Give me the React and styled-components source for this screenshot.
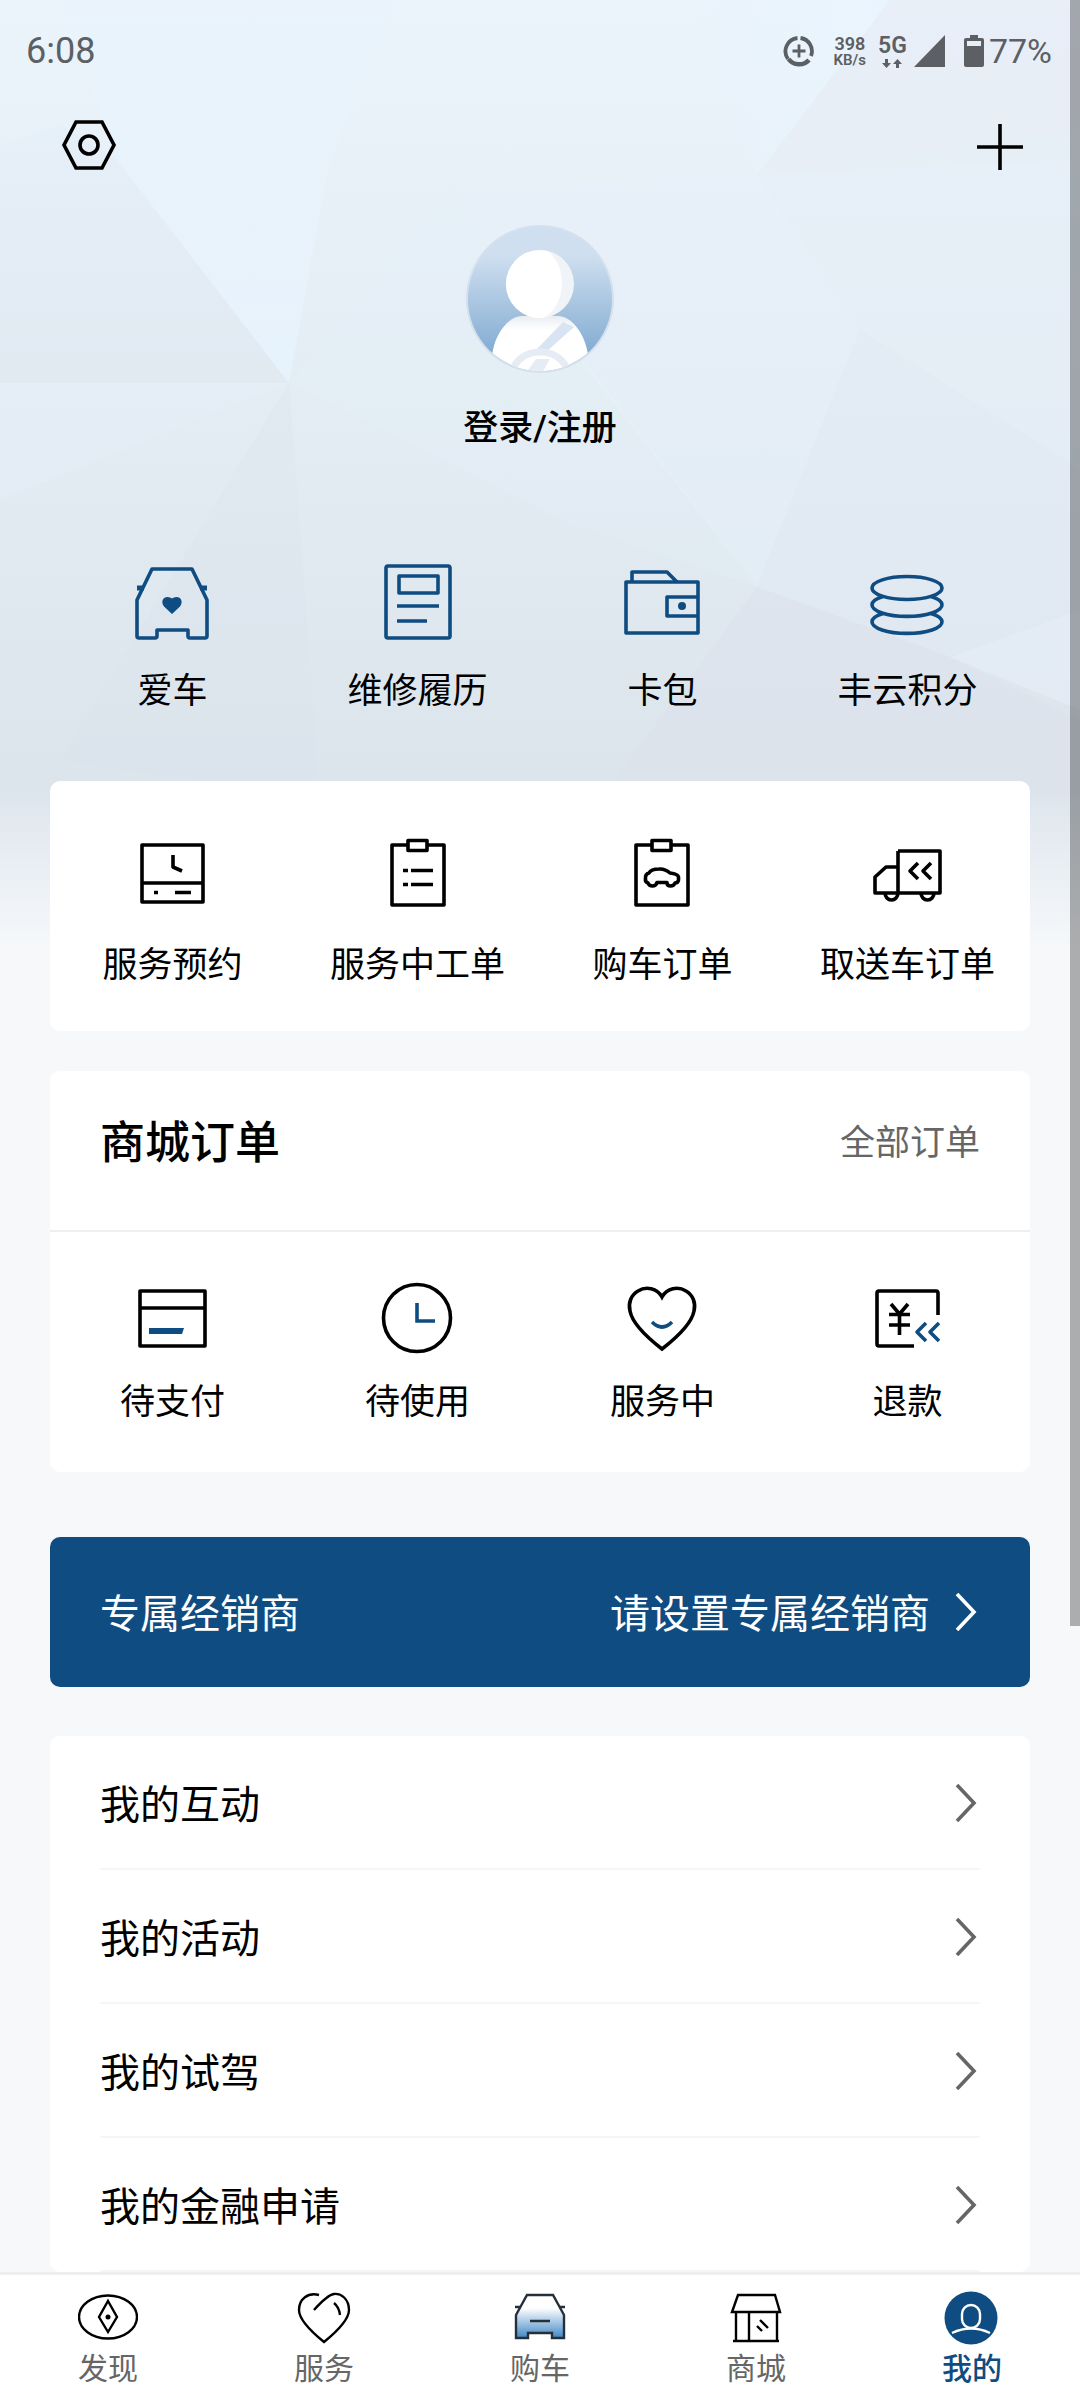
import React from 'react';
import styled, { createGlobalStyle } from 'styled-components';

const blue = '#0f4c81'

const GlobalStyle = createGlobalStyle`
* {
    box-sizing: border-box;
}
body {
    margin: 0;
    background: #f6f8fa;
    color: #000;
    font-family: Roboto, "Noto Sans CJK SC", sans-serif;
}
button {
    border: none;
    background: none;
    padding: 0;
    margin: 0;
    color: inherit;
    font: inherit;
    cursor: pointer;
}
a {
    color: inherit;
    text-decoration: none;
}
svg {
    display: block;
    flex: none;
}
`

const Page = styled.div`
height: 100vh;
display: flex;
flex-direction: column;
position: relative;
overflow: hidden;
`

const Content = styled.main`
flex: 1;
min-height: 0;
overflow-y: auto;
position: relative;
scrollbar-width: none;
`

const Backdrop = styled.svg`
position: absolute;
top: 0;
left: 0;
width: 100%;
height: 960px;
`

const Inner = styled.div`
position: relative;
padding: 0 50px;
`

const ScrollThumb = styled.div`
position: absolute;
top: 0;
right: 0;
width: 10px;
height: calc(68% - 6px);
background: rgba(0, 0, 0, 0.3);
`

const StatusBar = styled.div`
position: relative;
display: flex;
justify-content: space-between;
align-items: center;
height: 102px;
padding: 0 28px 0 26px;
color: #5c5f63;
`

const Time = styled.span`
font-size: 36px;
`

const StatusIcons = styled.div`
display: flex;
align-items: center;
`

const Speed = styled.div`
display: flex;
flex-direction: column;
align-items: center;
margin: 0 12px 0 19px;
font-size: 18px;
line-height: 18px;
font-weight: 600;
small {
    font-size: 15px;
    line-height: 15px;
}
`

const Network = styled.div`
display: flex;
flex-direction: column;
align-items: center;
gap: 2px;
margin-right: 7px;
font-size: 23px;
line-height: 22px;
font-weight: 600;
`

const Battery = styled.span`
display: flex;
align-items: center;
gap: 5px;
margin-left: 19px;
font-size: 34px;
`

const TopBar = styled.header`
display: flex;
justify-content: space-between;
align-items: center;
height: 86px;
margin: 0 2px 0 10px;
`

const Profile = styled.button`
display: block;
margin: 37px auto 106px;
svg {
    margin: 0 auto 31px;
}
span {
    display: block;
    font-size: 35px;
    line-height: 50px;
    font-weight: 500;
}
`

const Grid = styled.div`
display: grid;
grid-template-columns: repeat(4, 1fr);
`

const Tile = styled.button`
display: flex;
flex-direction: column;
align-items: center;
gap: ${props => props.$gap}px;
font-size: 35px;
line-height: 48px;
white-space: nowrap;
`

const Card = styled.section`
background: white;
border-radius: 10px;
`

const ServiceCard = styled(Card)`
margin-top: 65px;
padding: 50px 0 41px;
`

const OrderCard = styled(Card)`
margin-top: 40px;
padding-bottom: 45px;
`

const OrderHead = styled.div`
display: flex;
justify-content: space-between;
align-items: center;
height: 161px;
margin-bottom: 44px;
padding: 0 50px 23px;
border-bottom: 2px solid #eeeff0;
h2 {
    margin: 0;
    font-size: 45px;
    font-weight: 500;
}
a {
    color: #666;
    font-size: 35px;
}
`

const Dealer = styled.button`
display: flex;
justify-content: space-between;
align-items: center;
width: 100%;
height: 150px;
margin: 65px 0 49px;
padding: 0 50px 2px;
border-radius: 10px;
background: ${blue};
color: white;
font-size: 40px;
`

const DealerHint = styled.span`
display: flex;
align-items: center;
gap: 24px;
`

const MenuCard = styled(Card)`
padding: 0 50px;
`

const MenuRow = styled.a`
display: flex;
justify-content: space-between;
align-items: center;
height: 134px;
border-bottom: 2px solid #f5f6f8;
font-size: 40px;
svg {
    color: #666;
}
`

const TabBar = styled.nav`
display: grid;
grid-template-columns: repeat(5, 1fr);
padding: 11px 0 13px;
background: white;
border-top: 3px solid #eeeeee;
`

const Tab = styled.a`
display: flex;
flex-direction: column;
align-items: center;
gap: 5px;
color: ${props => props.$active ? blue : '#666'};
font-size: 30px;
line-height: 36px;
font-weight: ${props => props.$active ? 500 : 400};
`

const Icon = ({ color = '#000', children }) => (
    <svg width='84' height='84' viewBox='1 0 84 84' fill='none' stroke={color} strokeWidth='3.6' strokeLinejoin='round' aria-hidden='true'>
        {children}
    </svg>
)

const TabIcon = ({ children }) => (
    <svg width='60' height='60' viewBox='0 0 60 60' fill='none' stroke='#000' strokeWidth='2.4' aria-hidden='true'>
        {children}
    </svg>
)

const Chevron = () => (
    <svg width='26' height='40' viewBox='0 0 26 40' fill='none' stroke='currentColor' strokeWidth='3.6' aria-hidden='true'>
        <path d='M3 3L20 21L3 39' />
    </svg>
)

const quickLinks = [
    { label: '爱车', icon: <>
        <path d='M22 9H62L77 40V76Q77 78 75 78H60Q58 78 58 76V70H27V76Q27 78 25 78H9Q7 78 7 76V40Z' />
        <path d='M7 28H14M70 28H77' strokeWidth='5' />
        <path d='M42 54L34 46.500C30.500 42 33 37 37.500 37Q40.500 37 42 38.500Q43.500 37 46.500 37C51 37 53.500 42 50 46.500Z' fill={blue} stroke='none' />
    </> },
    { label: '维修履历', icon: <>
        <rect x='11' y='6' width='64' height='72' rx='2' />
        <rect x='24' y='16' width='39' height='17' />
        <path d='M22 46H64M22 61H52' />
    </> },
    { label: '卡包', icon: <>
        <rect x='6' y='22' width='72' height='51' />
        <path d='M12 22V12H47L57 22M78 37H47V56H78' />
        <circle cx='62' cy='46' r='4' fill={blue} stroke='none' />
    </> },
    { label: '丰云积分', icon: <>
        <ellipse cx='42' cy='28' rx='35' ry='11.500' />
        <path d='M18 36.500A35 11.500 0 1 0 66 36.500M18 53.500A35 11.500 0 1 0 66 53.500' />
    </> },
]

const services = [
    { label: '服务预约', icon: <>
        <rect x='12' y='14' width='61' height='57' />
        <path d='M12 52H73M43 24V36L52 40M24 61.500H28M45 61.500H61' />
    </> },
    { label: '服务中工单', icon: <>
        <path d='M33 14H17V74H69V14H52' />
        <rect x='33' y='9.500' width='19' height='10' />
        <path d='M28 39.500H33M36 39.500H58M28 53.500H33M36 53.500H58' />
    </> },
    { label: '购车订单', icon: <>
        <path d='M32 14H16V74H68V14H51' />
        <rect x='32' y='9.500' width='19' height='10' />
        <path d='M28 52Q25 51 25.500 48Q25 43 29 42Q31 38 39 38Q45 37.500 50 42Q58 43 58.500 46V49Q58 52 55 52Q54 55 50.500 55Q47 55 47 51.500H37Q36 55 32.500 55Q29 55 28 52Z' />
    </> },
    { label: '取送车订单', icon: <>
        <path d='M33 20H75V62H10V46L21 36H33M33 20V62' />
        <path d='M20 62A6.500 7 0 0 0 33 62M56 62A6.500 7 0 0 0 69 62' />
        <path d='M53 32L45 40L53 48M66 32L58 40L66 48' />
    </> },
]

const orders = [
    { label: '待支付', icon: <>
        <rect x='10' y='15' width='65' height='55' />
        <path d='M10 32H75' />
        <path d='M19 52H54L52 58H19Z' fill={blue} stroke='none' />
    </> },
    { label: '待使用', icon: <>
        <circle cx='42' cy='42' r='33.500' />
        <path d='M42 27V45H60' stroke={blue} strokeLinejoin='miter' />
    </> },
    { label: '服务中', icon: <>
        <path d='M42 21C37 12 26 10 18 15C11 19 8 27 10 35C12 46 24 59 42 73C60 59 72 46 74 35C76 27 73 19 66 15C58 10 47 12 42 21Z' strokeLinejoin='miter' />
        <path d='M32 46Q42 56 52 46' stroke={blue} />
    </> },
    { label: '退款', icon: <>
        <path d='M73 39V17Q73 15 71 15H14Q12 15 12 17V68Q12 70 14 70H49' />
        <path d='M26 28L34.500 38L43 28M24 38.500H45M24 49H45M34.500 38V59' />
        <path d='M61 47L52 56L61 65M74 47L65 56L74 65' stroke={blue} />
    </> },
]

const menu = ['我的互动', '我的活动', '我的试驾', '我的金融申请']

const tabs = [
    { label: '发现', icon: <>
        <ellipse cx='30' cy='31' rx='29' ry='21.500' />
        <path d='M30 15L39 31L30 46L21 31Z' />
        <circle cx='30' cy='31' r='2.500' fill='#000' stroke='none' />
    </> },
    { label: '服务', icon: <>
        <path d='M25 9C14 6 5 13 5 24C5 33 14 43 30 56C46 43 55 33 55 24C55 13 47 7 40 8C34 9 28 15 20 24M40 17Q45 21 46 29' />
    </> },
    { label: '购车', icon: <>
        <defs>
            <linearGradient id='car-fill' x1='0' y1='0' x2='0' y2='1'>
                <stop offset='0.3' stopColor='#fff' />
                <stop offset='1' stopColor='#3f87c6' />
            </linearGradient>
        </defs>
        <path d='M17 9H43L54 29V52H42V47H18V52H6V29Z' fill='url(#car-fill)' stroke='#26303a' />
        <path d='M5 21H11M49 21H55M20 35H40' stroke='#26303a' />
    </> },
    { label: '商城', icon: <>
        <path d='M12 9H49L54 26H6Z' />
        <path d='M10 26V55M23 26V55M51 26V55M7 55H53M34 34L42 42M31 40L36 45' />
    </> },
    { label: '我的', active: true, icon: <>
        <circle cx='29' cy='32' r='26.500' fill={blue} stroke='none' />
        <rect x='20' y='19' width='18' height='23' rx='9' stroke='#fff' />
        <path d='M10 47Q29 38 48 47' stroke='#fff' />
    </> },
]

const Facets = () => (
    <Backdrop viewBox='0 0 1080 960' preserveAspectRatio='none' aria-hidden='true'>
        <defs>
            <linearGradient id='sky' x1='0' y1='0' x2='0' y2='1'>
                <stop offset='0' stopColor='#ebf3fb' />
                <stop offset='0.4' stopColor='#e4ecf4' />
                <stop offset='0.8' stopColor='#dce4ec' />
                <stop offset='1' stopColor='#dfe6ee' />
            </linearGradient>
            <linearGradient id='fade' x1='0' y1='0' x2='0' y2='1'>
                <stop offset='0.82' stopColor='#f6f8fa' stopOpacity='0' />
                <stop offset='0.99' stopColor='#f6f8fa' />
            </linearGradient>
            <linearGradient id='shine' x1='0' y1='0' x2='0' y2='1'>
                <stop offset='0' stopColor='#e8f5ff' stopOpacity='0.3' />
                <stop offset='1' stopColor='#e8f5ff' stopOpacity='0.7' />
            </linearGradient>
            <linearGradient id='shade' x1='0' y1='0' x2='0' y2='1'>
                <stop offset='0' stopColor='#e2eef6' stopOpacity='0.4' />
                <stop offset='1' stopColor='#e1e9f1' stopOpacity='0.9' />
            </linearGradient>
            <linearGradient id='ray' x1='0' y1='0' x2='1' y2='0'>
                <stop offset='0' stopColor='#e9f5ff' stopOpacity='0' />
                <stop offset='1' stopColor='#e9f5ff' stopOpacity='0.9' />
            </linearGradient>
        </defs>
        <rect width='1080' height='960' fill='url(#sky)' />
        <path d='M0 145L60 125L117 160L289 383H0Z' fill='url(#shade)' />
        <path d='M60 0H400L330 160L289 383L117 160Z' fill='url(#shine)' />
        <path d='M0 383H289L0 500Z' fill='#e8f2fb' opacity='0.3' />
        <path d='M289 383L60 760L320 800Z' fill='#dbe3eb' opacity='0.3' />
        <path d='M289 383L448 191L600 380L757 587L560 520Z' fill='#e6f1fa' opacity='0.3' />
        <path d='M757 175L680 0H890Z' fill='url(#ray)' />
        <path d='M757 175L890 0H1080V160Z' fill='#e7edf5' opacity='0.7' />
        <path d='M757 175L1080 130V470L860 330Z' fill='#e5eff7' opacity='0.4' />
        <path d='M448 191L757 175L860 330L757 587Z' fill='url(#shine)' opacity='0.5' />
        <path d='M757 587L860 330L1080 470V610L950 657Z' fill='#e2eaf3' opacity='0.5' />
        <path d='M757 587L950 657L1080 720V800H600Z' fill='#dbe2ea' opacity='0.4' />
        <path d='M950 657L1080 610V710Z' fill='#e5edf7' opacity='0.7' />
        <rect width='1080' height='960' fill='url(#fade)' />
    </Backdrop>
)

const Avatar = () => (
    <svg width='148' height='148' viewBox='0 0 148 148' aria-hidden='true'>
        <defs>
            <linearGradient id='avatar-bg' x1='0' y1='0' x2='0' y2='1'>
                <stop offset='0.2' stopColor='#cfdff0' />
                <stop offset='0.9' stopColor='#7fa9d0' />
            </linearGradient>
            <linearGradient id='avatar-body' x1='0' y1='0' x2='0' y2='1'>
                <stop offset='0' stopColor='#e9edf1' />
                <stop offset='0.25' stopColor='#fff' />
            </linearGradient>
            <clipPath id='avatar-clip'>
                <circle cx='74' cy='74' r='72' />
            </clipPath>
            <clipPath id='head-clip'>
                <circle cx='74' cy='59' r='34' />
            </clipPath>
        </defs>
        <circle cx='74' cy='74' r='74' fill='#d3e0ed' />
        <g clipPath='url(#avatar-clip)'>
            <rect width='148' height='148' fill='url(#avatar-bg)' />
            <path d='M26 130C29 108 43 91 56 91H92C105 91 119 108 122 130V148H26Z' fill='url(#avatar-body)' />
            <path d='M97 97L108 102L80 127H68Z' fill='#d8e4f1' />
            <ellipse cx='74' cy='148' rx='27' ry='21' fill='#fff' stroke='#e6ecf4' strokeWidth='7' />
            <path d='M60 148L70 134H84L76 148Z' fill='#e6ecf4' />
        </g>
        <circle cx='74' cy='59' r='34' fill='#f0f3f7' />
        <ellipse cx='66' cy='58' rx='30' ry='38' fill='#fff' clipPath='url(#head-clip)' />
    </svg>
)

const Tiles = ({ items, color, gap }) => (
    <Grid>
        {items.map(item => (
            <Tile key={item.label} type='button' $gap={gap}>
                <Icon color={color}>{item.icon}</Icon>
                <span>{item.label}</span>
            </Tile>
        ))}
    </Grid>
)

export default function App(){

return (
    <Page>
        <GlobalStyle />
        <Content>
            <Facets />
            <StatusBar>
                <Time>6:08</Time>
                <StatusIcons>
                    <svg width='32' height='32' viewBox='0 0 32 32' fill='none' stroke='currentColor' aria-hidden='true'>
                        <path d='M14.500 3A13.300 13.300 0 0 0 5 24M17.500 3A13.300 13.300 0 0 1 28 21' strokeWidth='3.800' />
                        <path d='M5.500 24A13.300 13.300 0 0 0 26 25' strokeWidth='4.500' />
                        <path d='M16 9.500V22.500M9.500 16H22.500' strokeWidth='2.800' />
                    </svg>
                    <Speed>398<small>KB/s</small></Speed>
                    <Network>
                        5G
                        <svg width='20' height='9' viewBox='0 0 20 9' fill='currentColor' aria-hidden='true'>
                            <path d='M3 0H6V4H9L4.500 9L0 4H3ZM14 9H17V5H20L15.500 0L11 5H14Z' />
                        </svg>
                    </Network>
                    <svg width='31' height='32' viewBox='0 0 31 32' fill='currentColor' aria-hidden='true'>
                        <path d='M31 0V32H0Z' />
                    </svg>
                    <Battery>
                        <svg width='20' height='32' viewBox='0 0 20 32' fill='currentColor' aria-hidden='true'>
                            <path fillRule='evenodd' d='M6 0H14V3H18Q20 3 20 5V30Q20 32 18 32H2Q0 32 0 30V5Q0 3 2 3H6ZM3 6V11H17V6Z' />
                        </svg>
                        77%
                    </Battery>
                </StatusIcons>
            </StatusBar>
            <Inner>
                <TopBar>
                    <button type='button' aria-label='设置'>
                        <svg width='58' height='52' viewBox='0 0 58 52' fill='none' stroke='#000' strokeWidth='3.600' aria-hidden='true'>
                            <path d='M16 3H42L54 26L42 49H16L4 26Z' />
                            <circle cx='29' cy='26' r='9' />
                        </svg>
                    </button>
                    <button type='button' aria-label='添加'>
                        <svg width='56' height='52' viewBox='0 0 56 52' fill='none' stroke='#000' strokeWidth='3.600' aria-hidden='true'>
                            <path d='M28 5V51M5 28H51' />
                        </svg>
                    </button>
                </TopBar>
                <Profile type='button'>
                    <Avatar />
                    <span>登录/注册</span>
                </Profile>
                <Tiles items={quickLinks} color={blue} gap={24} />
                <ServiceCard>
                    <Tiles items={services} gap={27} />
                </ServiceCard>
                <OrderCard>
                    <OrderHead>
                        <h2>商城订单</h2>
                        <a href='#orders'>全部订单</a>
                    </OrderHead>
                    <Tiles items={orders} gap={19} />
                </OrderCard>
                <Dealer type='button'>
                    <span>专属经销商</span>
                    <DealerHint>请设置专属经销商<Chevron /></DealerHint>
                </Dealer>
                <MenuCard>
                    {menu.map(label => (
                        <MenuRow key={label} href='#menu'>
                            {label}
                            <Chevron />
                        </MenuRow>
                    ))}
                </MenuCard>
            </Inner>
        </Content>
        <TabBar>
            {tabs.map(tab => (
                <Tab key={tab.label} href='#tab' $active={tab.active}>
                    <TabIcon>{tab.icon}</TabIcon>
                    {tab.label}
                </Tab>
            ))}
        </TabBar>
        <ScrollThumb />
    </Page>
)
}
